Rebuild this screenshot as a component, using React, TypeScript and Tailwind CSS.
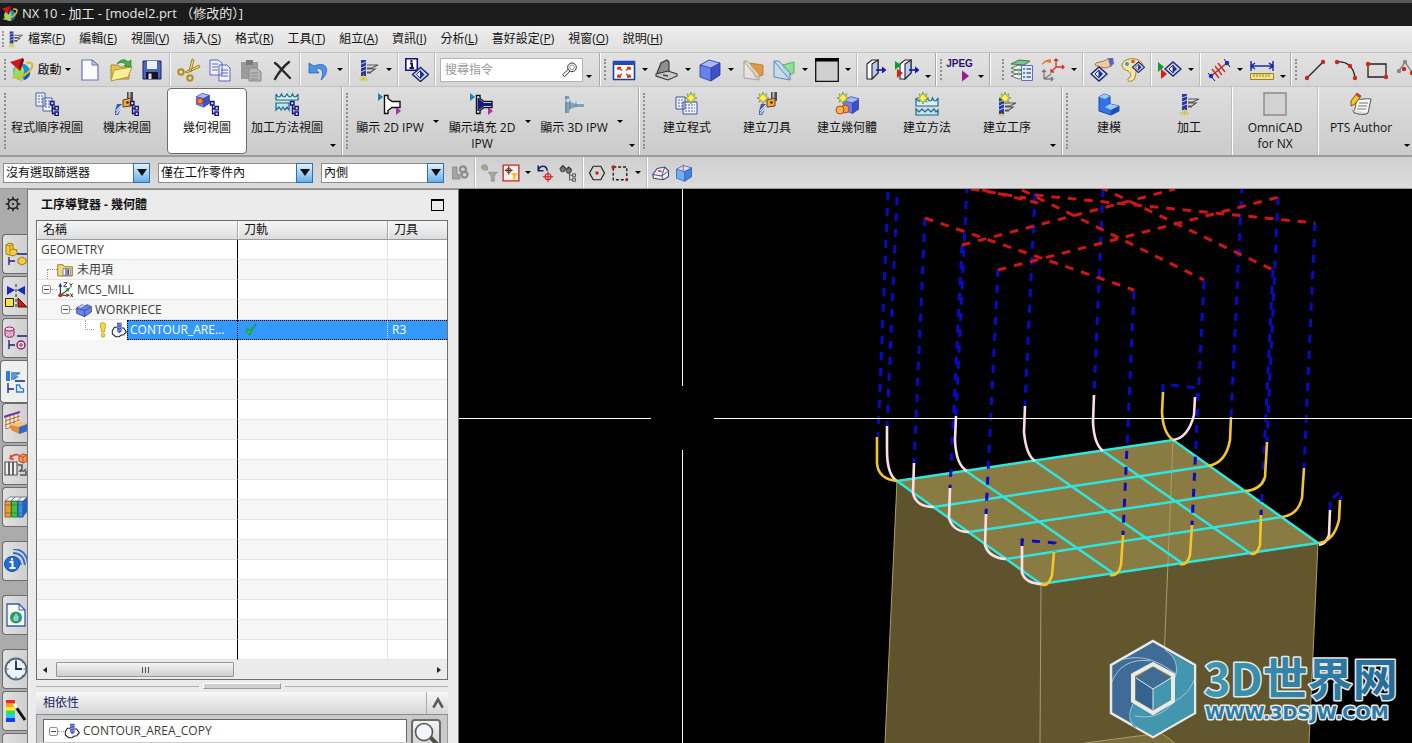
import React, { ReactNode } from "react";

type Kids = { children?: ReactNode };

/* ---------- icon helpers ---------- */

function Ico({ children, size = "size-6" }: Kids & { size?: string }) {
  return (
    <svg viewBox="0 0 24 24" className={`${size} shrink-0`} fill="none" aria-hidden="true">
      {children}
    </svg>
  );
}

const NxLogo = ({ size = "size-6" }: { size?: string }) => (
  <Ico size={size}>
    <circle cx="11.500" cy="14" r="8.500" fill="#1c8fd8" />
    <path d="M6 8c5-2 9 2 8 6s-2 5 0 8c-6 1-11-3-10.500-9z" fill="#8fe35c" />
    <path d="M14 22c4-1 7-5 6-9-2 1-6 5-6 9z" fill="#1b56b0" />
    <path d="M2 19c7 3 20-5 20.500-12 0-2-3-3-6-2" stroke="#e3b62c" strokeWidth="2.200" />
    <path d="M0 4l13-4 1 2-4 11z" fill="#d4161c" />
    <path d="M12 0l2 2-4 11-1-4z" fill="#7e0a10" />
  </Ico>
);

const Star = ({ x, y }: { x: number; y: number }) => (
  <g transform={`translate(${x} ${y})`}>
    <path d="M0-6l1.300 3.400L4.200-4.200 2.600-1.300 6 0 2.600 1.300 4.200 4.200 1.300 2.600 0 6-1.300 2.600-4.200 4.200-2.600 1.300-6 0-2.600-1.300-4.200-4.200-1.300-2.600z" fill="#fff34a" stroke="#6b7d4a" strokeWidth=".7" />
  </g>
);

const TreeMark = () => (
  <path d="M17.500 12.500v10M17.500 16.500h3M17.500 21.500h3M15.500 9.500h3.500v3.500h-3.500zM20 14.500h3.400v3.400H20zM20 20h3.400v3.400H20z" stroke="#14147a" strokeWidth="1.400" fill="#e4e4f4" />
);

const Tool = ({ color = "#2b3a9a" }: { color?: string }) => (
  <>
    <path d="M5 2h5v16H5z" fill={color} />
    <path d="M5 6l5-2M5 10l5-2M5 14l5-2" stroke="#b9c4f2" />
    <path d="M11 7h11l-6 3h-5M11 11h8l-4 3h-4M11 15h4" stroke="#555" strokeWidth="1.200" />
    <path d="M7.500 17v6M3 21h9M4 18l7 5M11 18l-7 5" stroke="#d6c436" />
  </>
);

const Sheets = () => (
  <>
    <path d="M1 1h9v13H1zM8 6h9v13H8z" fill="#f2f5ff" stroke="#4a5fa8" />
    <path d="M3 4h6M3 7h5M3 10h5M10 9h6M10 12h6M10 15h6" stroke="#4a5fa8" strokeDasharray="2 1" />
  </>
);

const SheetsWide = () => (
  <>
    <path d="M1 5h9v12H1zM8 10h14v12H8z" fill="#f2f5ff" stroke="#3a4fa0" />
    <path d="M3 8h6M3 11h5M3 14h5M10 13h10M10 16h10M10 19h10" stroke="#4a5fa8" strokeDasharray="2 1" />
  </>
);

const ToolPair = () => (
  <>
    <path d="M12 0h6v9h-6z" fill="#4c4c56" />
    <path d="M13.500 0h2v9h-2z" fill="#b8b8c0" />
    <path d="M8 8l8-2v8l-8 1z" fill="#f0ab3c" stroke="#6d3d10" />
    <circle cx="12.500" cy="10.500" r="1.300" fill="#402000" />
    <path d="M2 12h5v3l-4 8H0v-4z" fill="#3c5ca8" />
    <path d="M1 19l6-6M1 22l6-7" stroke="#dfe8ff" strokeWidth="1.200" />
  </>
);

const Box3d = ({ a = "#a9b8fb", b = "#6a80ec", c = "#3d52c4" }) => (
  <>
    <path d="M2 7l9-5 11 3v12l-9 6-11-4z" fill={b} />
    <path d="M2 7l9-5 11 3-9 5z" fill={a} />
    <path d="M13 10l9-5v12l-9 6z" fill={c} />
    <path d="M2 7l11 3 9-5M13 10v13M2 7l9-5 11 3v12l-9 6-11-4z" stroke="#2a3a9c" strokeWidth=".8" />
  </>
);

const Waves = () => (
  <>
    <path d="M1 8V2c2 4 4 4 5.500 0C8 6 10 6 12 2c2 4 4 4 5.500 0C19 6 21 6 23 2v6z" fill="#d8f0f4" stroke="#136a92" strokeWidth="1.200" />
    <path d="M1 11h13v7l-2-3-2 3-2-3-2 3-2-3-3 3z" fill="#c4e4ee" stroke="#136a92" strokeWidth="1.200" />
  </>
);

const WavesWide = () => (
  <>
    <path d="M1 14V6c2 4 4 4 5.500 0C8 10 10 10 12 6c2 4 4 4 5.500 0C19 10 21 10 23 6v8z" fill="#d8f0f4" stroke="#136a92" strokeWidth="1.200" />
    <path d="M1 23v-6l3 3 3-3 3 3 3-3 3 3 3-3 2 3 2-2v5z" fill="#c4e4ee" stroke="#136a92" strokeWidth="1.200" />
  </>
);

const Diamond = ({ x = 12, y = 12 }: { x?: number; y?: number }) => (
  <g transform={`translate(${x} ${y})`}>
    <path d="M-8 0L0-7 8 0 0 7z" fill="#cfd6ea" stroke="#1b2a66" strokeWidth="1.400" />
    <path d="M0-4v8l-4-4z" fill="#f4f7ff" stroke="#1b2a8c" />
    <path d="M0-4v8l4-4z" fill="#1a2ea0" />
  </g>
);

const Door = () => (
  <>
    <path d="M3 6l5-4h6v13l-6 6H3z" fill="#fff" stroke="#222" strokeWidth="1.100" />
    <path d="M8 6l6-4v13l-6 6z" fill="#b9cbf6" stroke="#222" strokeWidth="1.100" />
    <path d="M12 12h8" stroke="#1515c0" strokeWidth="1.600" />
    <path d="M18 8.500l4.500 3.500-4.500 3.500z" fill="#1515c0" />
  </>
);

function Nozzle({ kind }: { kind: "outline" | "filled" | "solid" }) {
  const bell = "M6.500 3.500h3.500v3l4 3h8v6h-8l-4 3v3H6.500z";
  if (kind === "solid") {
    return (
      <>
        <path d="M3 4h4l1 4 6 2h8v5h-8l-6 2-1 4H3z" fill="#7fa5b8" />
        <path d="M3 7h5l6 3h8v2h-8l-6-2H3z" fill="#cfe2ea" />
        <path d="M4 4v17M8 8v9M14 10v5" stroke="#55798c" strokeWidth=".8" />
      </>
    );
  }
  return (
    <>
      <path d="M0 1l5 4-5 4z" fill="#1f82ae" />
      <path d="M18 15l5 4-5 4z" fill="#b32ab0" />
      <path d={bell} fill="#fff" stroke="#111" strokeWidth="1.400" />
      {kind === "filled" && <path d="M8.500 6v13M10 9l4 3h7v1h-7l-4 3z" fill="#141a80" stroke="#141a80" strokeWidth="2" />}
    </>
  );
}

/* ---------- toolbar parts ---------- */

function IconButton({ label, children }: Kids & { label: string }) {
  return (
    <button type="button" aria-label={label} className="flex h-8 w-[31px] shrink-0 items-center justify-center">
      {children}
    </button>
  );
}

function Caret({ low = false }: { low?: boolean }) {
  return (
    <button
      type="button"
      aria-label="更多"
      className={`flex w-3 shrink-0 justify-center self-stretch ${low ? "items-end pb-2" : "items-center"}`}
    >
      <span className="border-x-[3px] border-t-[3px] border-x-transparent border-t-black" />
    </button>
  );
}

const Sep = () => (
  <span className="flex w-1.5 shrink-0 justify-center self-stretch">
    <span className="w-0.5 border-r border-white bg-[#bdbdbd]" />
  </span>
);

const Grip = () => <span className="my-1.5 ml-1 w-0 shrink-0 self-stretch border-l-2 border-dotted border-[#8f8f8f]" />;

function Group({ children, className = "" }: Kids & { className?: string }) {
  return (
    <div className={`flex shrink-0 items-center border-r border-[#a9a9a9] shadow-[1px_0_0_#fff] ${className}`}>
      <Grip />
      {children}
    </div>
  );
}

function BigButton({ icon, label, active = false }: { icon: ReactNode; label: string; active?: boolean }) {
  return (
    <button
      type="button"
      className={`flex h-[66px] w-20 shrink-0 flex-col items-center gap-1 rounded-sm border pt-[3px] leading-4 ${
        active ? "border-[#6d6d6d] bg-white" : "border-transparent"
      }`}
    >
      {icon}
      <span className="whitespace-pre">{label}</span>
    </button>
  );
}

/* ---------- title + menu ---------- */

const menus: [string, string][] = [
  ["檔案", "F"],
  ["編輯", "E"],
  ["視圖", "V"],
  ["插入", "S"],
  ["格式", "R"],
  ["工具", "T"],
  ["組立", "A"],
  ["資訊", "I"],
  ["分析", "L"],
  ["喜好設定", "P"],
  ["視窗", "O"],
  ["說明", "H"],
];

function TitleBar() {
  return (
    <header className="flex h-[26px] items-center gap-1 border-t-[3px] border-[#57585b] bg-[#1b1b1b] pb-0.5 pl-0.5 text-[13px] text-[#e6e6e6]">
      <NxLogo size="size-4" />
      <h1>NX 10 - 加工 - [model2.prt （修改的）]</h1>
    </header>
  );
}

function MenuBar() {
  return (
    <nav className="flex h-[27px] items-center border-b border-[#c2c2c2] bg-gradient-to-b from-[#ededed] to-[#e0e0e0]">
      <span className="ml-0.5 h-4 border-l-2 border-dotted border-[#999]" />
      <span className="mr-1 ml-0.5">
        <Ico size="size-[18px]">
          <Tool />
        </Ico>
      </span>
      <ul className="flex gap-3.5 whitespace-nowrap">
        {menus.map(([name, key]) => (
          <li key={key}>
            <button type="button">
              {name}(<u>{key}</u>)
            </button>
          </li>
        ))}
      </ul>
    </nav>
  );
}

/* ---------- standard toolbar ---------- */

function StandardBar() {
  return (
    <div className="flex h-[34px] overflow-hidden border-b border-[#c2c2c2] bg-gradient-to-b from-[#e2e2e2] to-[#d6d6d6]">
      <Group className="pr-1">
        <button type="button" className="flex h-8 shrink-0 items-center">
          <span className="flex w-[31px] justify-center">
            <NxLogo />
          </span>
          <span className="w-[25px] text-center whitespace-nowrap">啟動</span>
        </button>
        <Caret />
        <IconButton label="新建">
          <Ico>
            <path d="M4 2h10l6 5v15H4z" fill="#fbfbff" stroke="#6a72b8" strokeWidth="1.200" />
            <path d="M14 2v5h6z" fill="#c6ccf0" stroke="#6a72b8" />
          </Ico>
        </IconButton>
        <IconButton label="開啟">
          <Ico>
            <path d="M2 7h7l2 2h9v12H2z" fill="#e3c44e" stroke="#a8862a" />
            <path d="M5 12l18-3-4 10-17 4z" fill="#fbee9a" stroke="#b8962c" />
            <path d="M8 6c2-4 8-6 11-2l3-2v7l-7-1 2-2c-3-2-6-2-9 0z" fill="#3fb53a" stroke="#21802a" strokeWidth=".7" />
          </Ico>
        </IconButton>
        <IconButton label="儲存">
          <Ico>
            <path d="M3 3h18v18H3z" fill="#4a68b8" stroke="#1a2464" />
            <path d="M7 3h10v8H7z" fill="#e9f1fa" />
            <path d="M6 14h12v7H6z" fill="#101426" />
            <path d="M8.500 15.500h3V21h-3z" fill="#dcdcdc" />
          </Ico>
        </IconButton>
        <Sep />
        <IconButton label="剪下">
          <Ico>
            <path d="M12 13L15 1l2 1-3 12zM8 14L22 7l1 2-13 6z" fill="#f3dc58" stroke="#8c7414" strokeWidth=".8" />
            <circle cx="4" cy="14" r="2.700" stroke="#b08f18" strokeWidth="2" />
            <circle cx="13" cy="20" r="2.700" stroke="#b08f18" strokeWidth="2" />
          </Ico>
        </IconButton>
        <IconButton label="複製">
          <Ico>
            <path d="M2 2h8l4 3v12H2zM11 7h8l3 3v13H11z" fill="#eef0ff" stroke="#5a66b4" />
            <path d="M4 6h6M4 9h6M4 12h6M13 12h7M13 15h7M13 18h7" stroke="#5a66b4" />
          </Ico>
        </IconButton>
        <IconButton label="貼上">
          <Ico>
            <path d="M2 4h17v17H2z" fill="#9b9b9b" />
            <path d="M7 2h7v5H7z" fill="#7c7c7c" />
            <path d="M10 10h8l4 4v9H10z" fill="#b5b5b5" stroke="#8a8a8a" />
            <path d="M12 15h7M12 18h7M12 21h7" stroke="#8a8a8a" />
          </Ico>
        </IconButton>
        <IconButton label="刪除">
          <Ico>
            <path d="M5 5c4 3 9 9 15 15M19 4C14 8 9 14 5 21" stroke="#2a2a2a" strokeWidth="2.400" strokeLinecap="round" />
          </Ico>
        </IconButton>
        <Sep />
        <IconButton label="復原">
          <Ico>
            <path d="M2 5l0 10 10 0-3-4c5-2 9 2 5 11 8-6 9-20-7-14z" fill="#4f93e6" stroke="#1c58b0" strokeWidth=".7" />
          </Ico>
        </IconButton>
        <Caret />
        <Sep />
        <IconButton label="加工">
          <Ico>
            <Tool />
          </Ico>
        </IconButton>
        <Caret />
        <Sep />
        <IconButton label="命令資訊">
          <Ico>
            <path d="M.8.800h11.500v11.500H.8z" fill="#fff" stroke="#141478" strokeWidth="1.600" />
            <path d="M5 5.500h2V10M4.500 10H9M6.500 2v2" stroke="#141478" strokeWidth="2" />
            <Diamond x={15.5} y={16.5} />
          </Ico>
        </IconButton>
        <Sep />
        <label className="ml-0.5 flex h-6 w-[143px] shrink-0 items-center border border-[#b4b4b4] bg-white">
          <input
            type="search"
            aria-label="搜尋指令"
            placeholder="搜尋指令"
            className="min-w-0 flex-1 bg-transparent pl-1 outline-none placeholder:text-[#9a9a9a]"
          />
          <Ico size="mr-1 size-4">
            <circle cx="15" cy="8" r="6.500" stroke="#333" strokeWidth="1.500" />
            <circle cx="15" cy="8" r="3.500" stroke="#777" strokeWidth="1.200" />
            <path d="M9.500 11L1 19l3 3 8-8.500" stroke="#333" strokeWidth="1.500" />
          </Ico>
        </label>
        <Caret low />
      </Group>
      <Group>
        <span className="w-0.5" />
        <IconButton label="適合視窗">
          <Ico>
            <path d="M1.500 3.500h21v18h-21z" fill="#fff" stroke="#173f9c" strokeWidth="1.600" />
            <path d="M1 3h22v4H1z" fill="#1c4cb8" />
            <path d="M6 12V9.500h3M18 12V9.500h-3M6 16.500V19h3M18 16.500V19h-3M6 9.500l4 3M18 9.500l-4 3M6 19l4-3M18 19l-4-3" stroke="#d42a20" strokeWidth="1.500" />
          </Ico>
        </IconButton>
        <Caret />
        <IconButton label="視圖方向">
          <Ico>
            <path d="M2 15L6 5l6-3 2 2v9l-5 4z" fill="#8f8f8f" stroke="#333" strokeWidth="1.100" />
            <path d="M1 16l12-3 9 3v2l-9 4-12-4z" fill="#c9c9c9" stroke="#333" strokeWidth="1.100" />
            <path d="M8 17l5 1" stroke="#444" strokeWidth="1.500" />
          </Ico>
        </IconButton>
        <Caret />
        <IconButton label="著色">
          <Ico>
            <Box3d />
          </Ico>
        </IconButton>
        <Caret />
        <IconButton label="剖面">
          <Ico>
            <path d="M9 5l13 2v10l-8 3z" fill="#e09a45" stroke="#b9742a" strokeWidth=".8" />
            <path d="M3 3h3l12 13v6L3 20z" fill="#e8e6e0" fillOpacity=".7" stroke="#a9a193" />
            <path d="M3 3l15 19" stroke="#a9a193" />
          </Ico>
        </IconButton>
        <IconButton label="編輯剖面">
          <Ico>
            <path d="M11 7l11-3v11l-7 3z" fill="#8fe09a" stroke="#3fa654" strokeWidth=".8" />
            <path d="M2 3h5l11 12v7L2 19z" fill="#c4daf2" fillOpacity=".8" stroke="#5f86bd" />
            <path d="M2 3l16 19" stroke="#5f86bd" />
          </Ico>
        </IconButton>
        <Caret />
        <IconButton label="背景">
          <Ico>
            <path d="M.7.700h22.600v22.600H.7z" fill="#cfcfcf" stroke="#111" strokeWidth="1.300" />
            <path d="M0 0h24v3.500H0z" fill="#000" />
          </Ico>
        </IconButton>
        <Caret />
        <Sep />
        <IconButton label="匯出">
          <Ico>
            <Door />
          </Ico>
        </IconButton>
        <IconButton label="匯入">
          <Ico>
            <g transform="translate(2 0)">
              <Door />
            </g>
            <path d="M0 3l6 4-6 5z" fill="#149a2c" />
            <path d="M2 11l6 4-6 5z" fill="#d02018" />
          </Ico>
        </IconButton>
        <Caret low />
        <span className="w-px" />
      </Group>
      <Group className="pr-0.5">
        <span className="w-0.5" />
        <button type="button" className="flex h-8 w-[31px] shrink-0 flex-col items-center pt-1 font-['Liberation_Sans',sans-serif] text-[#2b1370]">
          <span className="text-[10px] leading-3 font-bold">JPEG</span>
          <Ico size="ml-3 size-3">
            <path d="M4 1l14 11L4 23z" fill="#9c1890" />
          </Ico>
        </button>
        <Caret low />
      </Group>
      <Group className="ml-2">
        <span className="w-0.5" />
        <IconButton label="圖層">
          <Ico>
            <path d="M1 18l8-3 8 3-8 3zM1 14l8-3 8 3-8 3zM1 10l8-3 8 3-8 3z" fill="#eef4ee" stroke="#5e7a6c" />
            <path d="M1 6l8-4 11 1-6 4z" fill="#7cc48c" stroke="#3d7c54" />
            <path d="M11.500 7.500h11v15h-11z" fill="#e4ebfb" stroke="#5a6eb0" />
            <path d="M13 11h2M13 15h2M13 19h2M16.500 11h4.500M16.500 15h4.500M16.500 19h4.500" stroke="#4a5ea8" strokeWidth="1.300" />
          </Ico>
        </IconButton>
        <IconButton label="座標系">
          <Ico>
            <path d="M15 9V1M15 9h8M15 9l-5 5M13 3l2-2 2 2M21 7l2 2-2 2M10 11v3h3" stroke="#d03428" strokeWidth="1.300" />
            <path d="M3 21v-9M3 21h9M3 21l7-5M1 14l2-2 2 2M10 19l2 2-2 2" stroke="#7a7a7a" strokeWidth="1.300" />
            <path d="M1 5l4-3 5-1 0 4-5-1-4 3z" fill="#ee7a2c" />
          </Ico>
        </IconButton>
        <Caret />
        <Sep />
        <IconButton label="編輯顯示">
          <Ico>
            <path d="M6 5l8-2 5-3 3 8-7 2-5-1-5-2z" fill="#f0c9a0" stroke="#8c6240" strokeWidth=".8" />
            <path d="M18 0l5-1 1 7-4 2z" fill="#5566c8" />
            <Diamond x={9} y={16} />
          </Ico>
        </IconButton>
        <IconButton label="調色盤">
          <Ico>
            <path d="M1 7c1-7 15-9 20-2 3 5-3 6-6 7 0 3 0 9-4 11-4 1-6-1-2-4 2-2 0-5-2-6-3-1-6-3-6-6z" fill="#f8e6a0" stroke="#a67c20" />
            <circle cx="6" cy="6" r="2" fill="#3b9be0" />
            <circle cx="12" cy="3.500" r="1.800" fill="#de4535" />
            <g transform="translate(7 1) scale(.75)">
              <Diamond x={14} y={11} />
            </g>
          </Ico>
        </IconButton>
        <Sep />
        <IconButton label="播放">
          <Ico>
            <path d="M0 4l6 5-6 5z" fill="#149a2c" />
            <path d="M3 11l6 5-6 5z" fill="#d02018" />
            <Diamond x={15} y={11} />
          </Ico>
        </IconButton>
        <Caret />
        <Sep />
        <IconButton label="量測">
          <Ico>
            <path d="M3 19L21 4M5 11l7 9M8 8l7 9M11 5l7 9" stroke="#c82c24" strokeWidth="1.400" />
            <path d="M1 15l7 8M17 1l6 8" stroke="#222" />
            <circle cx="4" cy="18" r="2.200" fill="#1b2cc0" />
            <circle cx="20" cy="5" r="2.200" fill="#1b2cc0" />
          </Ico>
        </IconButton>
        <Caret />
        <IconButton label="尺寸">
          <Ico>
            <path d="M1 3v10M23 3v10M1 8h22M5 5L1 8l4 3M19 5l4 3-4 3" stroke="#1c2ca8" strokeWidth="1.500" />
            <path d="M.5 15.500h23v6H.5z" fill="#f5e28c" stroke="#9a8424" />
            <path d="M4 16v3M7 16v3M10 16v3M13 16v3M16 16v3M19 16v3" stroke="#9a8424" />
          </Ico>
        </IconButton>
        <Caret low />
        <span className="w-px" />
      </Group>
      <Group>
        <span className="w-0.5" />
        <IconButton label="直線">
          <Ico>
            <path d="M4 20L20 4" stroke="#222" strokeWidth="1.300" />
            <circle cx="4" cy="20" r="2.200" fill="#c8281e" />
            <circle cx="20" cy="4" r="2.200" fill="#c8281e" />
          </Ico>
        </IconButton>
        <IconButton label="圓弧">
          <Ico>
            <path d="M3 4c10-1 17 5 18 16" stroke="#222" strokeWidth="1.300" />
            <circle cx="3" cy="4" r="2.200" fill="#c8281e" />
            <circle cx="16" cy="8" r="2.200" fill="#c8281e" />
            <circle cx="21" cy="20" r="2.200" fill="#c8281e" />
          </Ico>
        </IconButton>
        <IconButton label="矩形">
          <Ico>
            <path d="M3 6h18v13H3z" stroke="#222" strokeWidth="1.300" />
            <circle cx="3" cy="6" r="2.200" fill="#c8281e" />
            <circle cx="21" cy="19" r="2.200" fill="#c8281e" />
          </Ico>
        </IconButton>
        <IconButton label="曲線">
          <Ico>
            <path d="M3 13l6-9 6 9 8 3" stroke="#888" strokeWidth="1.500" />
            <circle cx="3" cy="13" r="2.200" fill="#888" />
            <circle cx="9" cy="4" r="2.200" fill="#888" />
            <circle cx="8" cy="11" r="2.200" fill="#c8281e" />
            <circle cx="16" cy="15" r="2.200" fill="#c8281e" />
          </Ico>
        </IconButton>
      </Group>
    </div>
  );
}

/* ---------- manufacturing toolbar ---------- */

function MachiningBar() {
  return (
    <div className="flex h-[70px] overflow-hidden border-b-2 border-[#9c9c9c] bg-gradient-to-b from-[#dedede] to-[#cbcbcb]">
      <Group>
        <span className="w-px" />
        <BigButton label="程式順序視圖" icon={<Ico><Sheets /><TreeMark /></Ico>} />
        <BigButton label="機床視圖" icon={<Ico><ToolPair /><TreeMark /></Ico>} />
        <BigButton
          active
          label="幾何視圖"
          icon={
            <Ico>
              <g transform="scale(.66)"><Box3d /></g>
              <circle cx="5" cy="9" r="3" fill="#f08a2c" stroke="#b8341c" />
              <TreeMark />
            </Ico>
          }
        />
        <BigButton label="加工方法視圖" icon={<Ico><Waves /><TreeMark /></Ico>} />
        <Caret low />
        <span className="w-0.5" />
      </Group>
      <Group>
        <span className="w-0.5" />
        <BigButton label="顯示 2D IPW" icon={<Ico><Nozzle kind="outline" /></Ico>} />
        <Caret />
        <BigButton label={"顯示填充 2D\nIPW"} icon={<Ico><Nozzle kind="filled" /></Ico>} />
        <Caret />
        <BigButton label="顯示 3D IPW" icon={<Ico><Nozzle kind="solid" /></Ico>} />
        <Caret />
        <Caret low />
      </Group>
      <Group>
        <span className="w-0.5" />
        <BigButton label="建立程式" icon={<Ico><SheetsWide /><Star x={16} y={6} /></Ico>} />
        <BigButton label="建立刀具" icon={<Ico><g transform="translate(4 0)"><ToolPair /></g><Star x={8} y={6} /></Ico>} />
        <BigButton
          label="建立幾何體"
          icon={
            <Ico>
              <g transform="translate(7 3) scale(.8)"><Box3d /></g>
              <circle cx="10" cy="17" r="4" fill="#f6a23c" stroke="#c0401c" />
              <circle cx="5" cy="18" r="4" fill="#fbb84c" stroke="#c0401c" />
              <Star x={8} y={6} />
            </Ico>
          }
        />
        <BigButton label="建立方法" icon={<Ico><WavesWide /><Star x={8} y={6} /></Ico>} />
        <BigButton label="建立工序" icon={<Ico><g transform="translate(-1 4)"><Tool /></g><Star x={10} y={6} /></Ico>} />
        <Caret low />
        <span className="w-0.5" />
      </Group>
      <Group>
        <span className="w-px" />
        <BigButton
          label="建模"
          icon={
            <Ico>
              <path d="M2 5l5-3 6 2v8l9 2v5l-8 4-12-4z" fill="#3273e6" stroke="#1b4cae" />
              <path d="M2 5l5-3 6 2-5 3zM8 15l5-3 9 2-8 4z" fill="#a3c8fb" />
              <path d="M14 18l8-4v5l-8 4z" fill="#1c50bc" />
            </Ico>
          }
        />
        <BigButton label="加工" icon={<Ico><Tool /></Ico>} />
        <Sep />
        <BigButton label={"OmniCAD\nfor NX"} icon={<Ico><path d="M1 1h22v22H1z" fill="#d2d2d2" stroke="#8a8a8a" strokeWidth="1.400" /></Ico>} />
        <Sep />
        <BigButton
          label="PTS Author"
          icon={
            <Ico>
              <path d="M8 7c5 1 9-1 14 0l-3 14c-4 2-9-1-14 0z" fill="#f6f6f6" stroke="#555" />
              <path d="M4 18c-1 4 12 6 15 3" fill="#ddd" stroke="#555" />
              <path d="M10 11h9M9 14h9M8 17h9" stroke="#777" />
              <path d="M8 1l4 3-6 8-4 2 0-5z" fill="#f5c832" stroke="#7b5a10" />
              <path d="M8 1l4 3-1.500 2-4-3z" fill="#d0402c" />
            </Ico>
          }
        />
        <Caret low />
      </Group>
    </div>
  );
}

/* ---------- selection toolbar ---------- */

function Picker({ label, value, className }: { label: string; value: string; className: string }) {
  return (
    <div className={`relative h-5 shrink-0 ${className}`}>
      <select
        aria-label={label}
        defaultValue={value}
        className="h-5 w-full appearance-none border border-[#8c8c8c] bg-white pl-0.5 leading-4 outline-none"
      >
        <option>{value}</option>
      </select>
      <span className="pointer-events-none absolute inset-y-0 right-0 flex w-[17px] items-center justify-center border border-[#2d6fb0] bg-gradient-to-b from-[#e4f2fd] to-[#64aeea]">
        <span className="border-x-5 border-t-7 border-x-transparent border-t-[#111]" />
      </span>
    </div>
  );
}

function SmallButton({ label, children, wide = false }: Kids & { label: string; wide?: boolean }) {
  return (
    <button type="button" aria-label={label} className={`flex h-6 shrink-0 items-center justify-center ${wide ? "w-6" : "w-[22px]"}`}>
      {children}
    </button>
  );
}

function SelectionBar() {
  const s = "size-[18px]";
  return (
    <div className="flex h-8 items-center border-b border-[#9a9a9a] bg-gradient-to-b from-[#cfcfcf] to-[#dcdcdc] pl-[3px]">
      <Picker label="選取篩選器" value="沒有選取篩選器" className="mr-2 w-[147px]" />
      <Picker label="選取範圍" value="僅在工作零件內" className="mr-2 w-[155px]" />
      <Picker label="規則" value="內側" className="mr-1 w-[123px]" />
      <SmallButton label="連結" wide>
        <Ico size={s}>
          <path d="M2 4v16h10v-6H8V4z" fill="#a4a4a4" stroke="#808080" />
          <circle cx="16" cy="7" r="4" stroke="#8d8d8d" strokeWidth="3" />
          <circle cx="18" cy="14" r="4" stroke="#8d8d8d" strokeWidth="3" />
        </Ico>
      </SmallButton>
      <Sep />
      <SmallButton label="清除篩選">
        <Ico size={s}>
          <path d="M2 6a4 4 0 018-2v4H4M11 11h12l-4 5v7h-4v-7z" fill="#a9a594" stroke="#87958f" />
        </Ico>
      </SmallButton>
      <SmallButton label="篩選選取">
        <Ico size={s}>
          <path d="M1.500 1.500h21v21h-21z" fill="#fdf0ec" stroke="#c22a22" strokeWidth="1.800" />
          <path d="M9 3v11M4 8.500h10" stroke="#333" strokeWidth="1.500" />
          <circle cx="9" cy="8.500" r="3" stroke="#9a2a20" strokeWidth="1.300" />
          <path d="M12 12h9l-3 4v5h-3v-5z" fill="#f2c12c" />
        </Ico>
      </SmallButton>
      <Caret />
      <SmallButton label="重設">
        <Ico size={s}>
          <path d="M3 9c2-8 11-8 12 0M3 2v7h7" stroke="#1c2470" strokeWidth="2.200" />
          <circle cx="16" cy="17" r="4" stroke="#d02020" strokeWidth="1.500" />
          <path d="M16 10v14M9 17h14" stroke="#d02020" strokeWidth="1.500" />
        </Ico>
      </SmallButton>
      <SmallButton label="尋找" wide>
        <Ico size={s}>
          <path d="M1 7l4-5 4 4M9 8l4-4 4 4" stroke="#333" strokeWidth="1.500" />
          <circle cx="5" cy="7" r="3.500" fill="#777" stroke="#333" />
          <circle cx="13" cy="9" r="3.500" fill="#777" stroke="#333" />
          <path d="M14 10v12M14 15h4M14 21h4M18 13h4v4h-4zM18 19h4v4h-4z" fill="#d9cf7c" stroke="#4c5c6c" strokeWidth="1.300" />
        </Ico>
      </SmallButton>
      <Sep />
      <SmallButton label="點">
        <Ico size={s}>
          <path d="M7 3h10l5 9-5 9H7l-5-9z" stroke="#222" strokeWidth="1.600" />
          <circle cx="12" cy="12" r="2.300" fill="#c81e1e" />
        </Ico>
      </SmallButton>
      <SmallButton label="矩形選取" wide>
        <Ico size={s}>
          <path d="M3 4h18v17H3z" stroke="#222" strokeWidth="1.800" strokeDasharray="4 2.500" />
          <circle cx="3" cy="4" r="2.500" fill="#c81e1e" />
          <circle cx="21" cy="21" r="2" fill="#c81e1e" />
        </Ico>
      </SmallButton>
      <Caret />
      <Sep />
      <SmallButton label="隱藏邊">
        <Ico size={s}>
          <path d="M1 14l6-8 10-2 5 5v8l-7 4-13-2z" fill="#f0f0f8" stroke="#444c74" strokeWidth="1.500" />
          <path d="M1 14l12 2 4-12M13 16l2 5M13 16l8-6" stroke="#444c74" strokeWidth="1.300" />
          <path d="M8 9l5 1" stroke="#d02a2a" strokeWidth="2" />
        </Ico>
      </SmallButton>
      <SmallButton label="實體" wide>
        <Ico size={s}>
          <Box3d a="#cfe4fc" b="#6db0f4" c="#3c86e0" />
          <path d="M11 1v9" stroke="#d02a2a" />
        </Ico>
      </SmallButton>
    </div>
  );
}

/* ---------- resource tabs ---------- */

function ResourceTab({ label, active = false, className = "", children }: Kids & { label: string; active?: boolean; className?: string }) {
  return (
    <button
      type="button"
      aria-label={label}
      className={`flex shrink-0 items-center justify-center rounded-l border border-r-0 border-[#6c6c6c] ${
        active ? "h-[43px] w-7 bg-[#efefef]" : "ml-0.5 h-10 w-[26px] bg-gradient-to-r from-[#e0e0e0] to-[#cfcfcf]"
      } ${className}`}
    >
      {children}
    </button>
  );
}

function ResourceBar() {
  return (
    <aside className="flex w-7 shrink-0 flex-col gap-0.5 overflow-hidden border-r border-[#7a7a7a] bg-[#ababab]">
      <button type="button" aria-label="設定" className="mb-[15px] flex h-7 w-[26px] shrink-0 items-center justify-center pt-0.5">
        <Ico size="size-4">
          <circle cx="12" cy="12" r="7" stroke="#222" strokeWidth="2.400" />
          <circle cx="12" cy="12" r="1.600" fill="#222" />
          <path d="M12 1v4M12 19v4M1 12h4M19 12h4M4 4l3 3M17 17l3 3M20 4l-3 3M7 17l-3 3" stroke="#222" strokeWidth="2.400" />
        </Ico>
      </button>
      <ResourceTab label="裝配導覽器">
        <Ico>
          <path d="M2 3l3-2 4 1v5l4 1v4l-4 2-7-2z" fill="#f6cd3c" stroke="#a17a10" />
          <path d="M2 3l4 1 3-2M6 4v8M6 8l3-1 4 1" stroke="#a17a10" strokeWidth=".8" />
          <path d="M14 17l4-2 4 2v4l-4 2-4-2z" fill="#f6cd3c" stroke="#a17a10" />
          <path d="M5 15v8M5 19h6M13 12h10" stroke="#1b1b80" strokeWidth="1.300" />
        </Ico>
      </ResourceTab>
      <ResourceTab label="約束導覽器">
        <Ico>
          <path d="M3 2l8 4-8 5zM21 2l-8 4 8 5z" fill="#1c2ab4" />
          <path d="M12 0v24" stroke="#222" strokeDasharray="3 2" />
          <path d="M1.500 14.500h8v8h-8z" fill="#ffe23c" stroke="#222" />
          <path d="M14 14l9 9h-9z" fill="#c81e18" stroke="#501010" />
        </Ico>
      </ResourceTab>
      <ResourceTab label="零件導覽器">
        <Ico>
          <path d="M1 3v6c0 3 9 3 9 0V3" fill="#e2a8c8" stroke="#8c2460" />
          <ellipse cx="5.500" cy="3" rx="4.500" ry="2" fill="#f5d3e4" stroke="#8c2460" />
          <path d="M5 14v9M5 19h6M13 10h10" stroke="#1b1b80" strokeWidth="1.300" />
          <circle cx="17" cy="19" r="4" fill="#f3dbe8" stroke="#8c2460" strokeWidth="1.500" />
          <circle cx="17" cy="19" r="1.300" stroke="#8c2460" />
        </Ico>
      </ResourceTab>
      <ResourceTab active label="工序導覽器">
        <Ico>
          <path d="M3 1h4v10H3z" fill="#2f7dd0" />
          <path d="M8 3h9l-4 2H8M8 7h6l-3 2H8" stroke="#2f7dd0" strokeWidth="1.300" />
          <path d="M5 13v10M5 19h6M12 11h10" stroke="#1b1b80" strokeWidth="1.300" />
          <path d="M13.500 15v7h7v-3l-3-1-1-3z" fill="#e2eefb" stroke="#2f7dd0" strokeWidth="1.300" />
        </Ico>
      </ResourceTab>
      <ResourceTab label="機床導覽器" className="-mt-0.5">
        <Ico>
          <path d="M0 6l16-5v11L2 19z" fill="#fbf3e4" />
          <path d="M1 10l15-5M1 14l15-5M2 18l8-3M2 6v12M6 5v12M10 3v12M14 2v8" stroke="#b86a30" />
          <path d="M0 6l16-5" stroke="#6a3cb4" strokeWidth="2.200" />
          <path d="M7 14l8-3 8 2v7l-8 3-8-4z" fill="#e88c34" />
          <path d="M7 14l8 2 8-3-8-2z" fill="#f7c47c" />
          <path d="M15 16l9-3v7l-9 3z" fill="#2c6cd0" />
        </Ico>
      </ResourceTab>
      <ResourceTab label="加工特徵">
        <Ico>
          <path d="M1 9h12v13H1z" fill="#f0f0f0" stroke="#555" strokeWidth="1.200" />
          <path d="M5 9v13M9 9v13" stroke="#444" strokeWidth="1.600" />
          <path d="M6 6c2-4 5-5 9-4M6 6l1-4M6 6l4 0" stroke="#e0462c" strokeWidth="1.600" />
          <path d="M15 3l4-2 4 1v6l-4 2-4-2z" fill="#f29a52" stroke="#c8401c" />
          <path d="M15 3l4 1v6M19 4l4-2" stroke="#c8401c" strokeWidth=".8" />
          <path d="M14 12h4v4l-2 2h4l2-2M16 22h6v-4" stroke="#555" strokeWidth="1.600" />
        </Ico>
      </ResourceTab>
      <ResourceTab label="重用程式庫">
        <Ico>
          <path d="M1 6h6v16H1z" fill="#f19a30" stroke="#b4581a" />
          <path d="M7.500 6h6v16h-6z" fill="#42c442" stroke="#1c7c24" />
          <path d="M14 6h5v16h-5z" fill="#3c8ee8" stroke="#1c54a8" />
          <path d="M19 6l4-4v15l-4 5z" fill="#1f63c4" />
          <path d="M1 6l5-4h17l-4 4z" fill="#f4f8f4" stroke="#557" strokeWidth=".7" />
          <path d="M7 6l4-4M13.500 6l4-4M1 10h18M1 18h18" stroke="#2c7a46" strokeWidth=".8" />
        </Ico>
      </ResourceTab>
      <ResourceTab label="HD3D 工具" className="mt-3">
        <Ico>
          <path d="M9 8c4 0 7 3 8 8M9 4c7 0 11 5 12 12M9 0c9 0 14 6 15 15" stroke="#3a6fc8" strokeWidth="1.800" />
          <circle cx="8" cy="15" r="7.500" fill="#1f6fd0" stroke="#164f9e" />
          <path d="M5.500 13h3v6M5.500 19h6M8 9v2.500" stroke="#fff" strokeWidth="2" />
        </Ico>
      </ResourceTab>
      <ResourceTab label="網頁瀏覽器" className="mt-3">
        <Ico>
          <path d="M3 1h12l6 6v16H3z" fill="#f8fbff" stroke="#2d5fae" strokeWidth="1.300" />
          <path d="M15 1v6h6" stroke="#2d5fae" />
          <circle cx="12" cy="14.500" r="6" fill="#2f9a52" />
          <path d="M12 10l3 4-1 4h-4l-1-3z" fill="#86cdf2" />
        </Ico>
      </ResourceTab>
      <ResourceTab label="歷史記錄" className="mt-3">
        <Ico>
          <circle cx="12" cy="12" r="10.500" fill="#eef3fa" stroke="#5c6878" strokeWidth="1.800" />
          <path d="M12 4v8h6" stroke="#1c2c50" strokeWidth="1.800" />
          <path d="M12 2.500v2M12 19.500v2M2.500 12h2M19.500 12h2M5 5l1 1M18 18l1 1M19 5l-1 1M5 19l1-1" stroke="#44546c" />
        </Ico>
      </ResourceTab>
      <ResourceTab label="系統材料">
        <Ico>
          <path d="M2 1h9v3.500H2z" fill="#f02820" />
          <path d="M2 4.500h9V8H2z" fill="#f8a01c" />
          <path d="M2 8h9v3.500H2z" fill="#f4f02c" />
          <path d="M2 11.500h9V15H2z" fill="#3cdc3c" />
          <path d="M2 15h9v4H2z" fill="#2cc8f0" />
          <path d="M2 19h9v4H2z" fill="#1c3ce8" />
          <path d="M12 8l9 13" stroke="#111" strokeWidth="3" />
          <path d="M10 5l3 4" stroke="#fff" strokeWidth="3" />
        </Ico>
      </ResourceTab>
      <ResourceTab label="角色" />
    </aside>
  );
}

/* ---------- operation navigator ---------- */

const Expander = () => (
  <button type="button" aria-label="收合" className="flex size-[9px] shrink-0 items-center justify-center rounded-[2px] border border-[#8f8f8f] bg-white">
    <span className="h-px w-[5px] bg-[#444]" />
  </button>
);

const Dots = ({ className }: { className: string }) => <span className={`h-0 shrink-0 border-t border-dotted border-[#999] ${className}`} />;

const Elbow = ({ className }: { className: string }) => (
  <span className={`h-2.5 w-[9px] shrink-0 self-start border-b border-l border-dotted border-[#999] ${className}`} />
);

const OperationIcon = () => (
  <Ico size="size-4">
    <path d="M9 8H5l-3 5v5l5 4h5l3-2 4-1 4-4-4-6h-3" fill="#f6f6fa" stroke="#222" strokeWidth="1.600" />
    <path d="M9 1h7v13l-3.500 3L9 14z" fill="#4a5cc0" />
    <path d="M9 5l7-2M9 9l7-2M9 13l7-2" stroke="#b4c0f4" />
  </Ico>
);

type Row = { name?: ReactNode; path?: ReactNode; tool?: string; selected?: boolean };

const rows: Row[] = [
  { name: <span className="pl-1">GEOMETRY</span> },
  {
    name: (
      <>
        <span className="ml-2.5 h-2.5 w-2.5 shrink-0 self-end border-t border-l border-dotted border-[#999]" />
        <span className="mr-1">
          <Ico size="size-4">
            <path d="M1 4h8l2 3h12v14H1z" fill="#f0d878" stroke="#8c7424" strokeWidth="1.300" />
            <path d="M9 10h11v10H9z" fill="#fdfdf0" stroke="#4c4c8c" />
            <path d="M12 12h5v6h-5M12 15h4" stroke="#28288c" strokeWidth="1.800" />
          </Ico>
        </span>
        未用項
      </>
    ),
  },
  {
    name: (
      <>
        <span className="ml-[5px]">
          <Expander />
        </span>
        <Dots className="w-1.5" />
        <span className="mr-0.5">
          <Ico size="size-4">
            <path d="M5 20V3M5 20h13M5 20l12-9" stroke="#222" strokeWidth="1.600" />
            <path d="M2 7l3-6 3 6z" fill="#1c3cc8" />
            <path d="M13 10l7-2-3 7z" fill="#1d9a38" />
            <path d="M14 17l6 3-6 3z" fill="#c82020" />
            <circle cx="5" cy="20" r="3" fill="#d02020" />
            <path d="M10 1h5l-5 6h5M19 2l2 3 2-3M21 5v3M20 17l4 6M24 17l-4 6" stroke="#222" strokeWidth="1.300" />
          </Ico>
        </span>
        <span className="pl-0.5">MCS_MILL</span>
      </>
    ),
  },
  {
    name: (
      <>
        <span className="ml-6">
          <Expander />
        </span>
        <Dots className="w-1.5" />
        <span className="mr-[3px]">
          <Ico size="size-4">
            <path d="M1 9l8-5 4 2 4-2 6 3v8l-10 7-12-5z" fill="#6c82e8" stroke="#34449c" strokeWidth="1.300" />
            <path d="M1 9l12 4 10-6M13 13v9M6 6l5 3" stroke="#34449c" strokeWidth="1.300" />
            <path d="M9 4l4 2-6 3-4-1z" fill="#c2cdfb" />
          </Ico>
        </span>
        WORKPIECE
      </>
    ),
  },
  {
    selected: true,
    name: (
      <>
        <Elbow className="ml-12" />
        <span className="ml-px flex shrink-0 items-center">
          <Ico size="size-4">
            <path d="M8 2c5-2 9 0 8 4l-2 9h-4L8 6z" fill="#f7d83c" stroke="#a88a14" />
            <circle cx="12" cy="20" r="2.800" fill="#f7d83c" stroke="#a88a14" />
          </Ico>
          <OperationIcon />
        </span>
        <span className="flex h-full flex-1 items-center border-y border-l border-dotted border-black bg-[#3399ff] pl-0.5 text-white">CONTOUR_ARE...</span>
      </>
    ),
    path: (
      <Ico size="size-3.5">
        <path d="M3 12l4-2 3 4c3-6 6-9 11-12-4 5-8 11-11 19z" fill="#2ed02e" stroke="#128a1c" strokeWidth="1.300" />
      </Ico>
    ),
    tool: "R3",
  },
  ...Array.from({ length: 16 }, () => ({})),
];

function OperationTable() {
  const head = "h-[19px] border-b border-[#9a9a9a] bg-gradient-to-b from-[#f4f4f4] via-[#ebebeb] to-[#d9dbdd] py-0 pl-1.5 text-left font-normal shadow-[inset_1px_0_0_#fff]";
  return (
    <div className="border border-[#6e6e6e] bg-white">
      <table className="w-full table-fixed border-separate border-spacing-0">
        <thead>
          <tr className="leading-[18px]">
            <th className={`w-[200px] ${head}`}>名稱</th>
            <th className={`w-[150px] border-l border-l-[#a6a6a6] ${head}`}>刀軌</th>
            <th className={`border-l border-l-[#a6a6a6] ${head}`}>刀具</th>
          </tr>
        </thead>
        <tbody className="text-[#3c3c3c]">
          {rows.map((r, i) => {
            const sel = r.selected ? "border-y border-dotted border-y-black bg-[#3399ff] text-white" : "border-b border-b-[#e4e4e4]";
            return (
              <tr key={i} className={i % 2 ? "bg-[#f6f6f6]" : "bg-white"}>
                <td className={`h-5 p-0 ${r.selected ? "" : "border-b border-b-[#e4e4e4]"}`}>
                  <div className={`flex items-center overflow-hidden whitespace-nowrap ${r.selected ? "h-5" : "h-[19px]"}`}>{r.name}</div>
                </td>
                <td className={`h-5 border-l border-l-black p-0 pl-1.5 ${sel}`}>{r.path}</td>
                <td className={`h-5 border-l border-l-[#e4e4e4] p-0 pl-1 ${sel}`}>{r.tool}</td>
              </tr>
            );
          })}
        </tbody>
      </table>
      <div className="flex h-[19px] items-center justify-between bg-[#ebebeb] px-1.5">
        <button type="button" aria-label="向左" className="border-y-[3px] border-r-4 border-y-transparent border-r-[#222]" />
        <div className="mr-auto ml-[9px] flex h-[15px] w-[178px] items-center justify-center gap-0.5 rounded-[1px] border border-[#979797] bg-gradient-to-b from-[#f5f5f5] to-[#cfcfcf]">
          <span className="h-1.5 w-px bg-[#555]" />
          <span className="h-1.5 w-px bg-[#555]" />
          <span className="h-1.5 w-px bg-[#555]" />
        </div>
        <button type="button" aria-label="向右" className="border-y-[3px] border-l-4 border-y-transparent border-l-[#222]" />
      </div>
    </div>
  );
}

function Navigator() {
  return (
    <section className="flex w-[431px] shrink-0 flex-col border-t border-r border-t-[#8a8a8a] border-r-[#777] bg-[#ebebeb] pr-2.5 pl-2">
      <div className="flex h-[30px] items-center justify-between pr-1 pl-[5px]">
        <h2 className="font-bold">工序導覽器 - 幾何體</h2>
        <button type="button" aria-label="最大化" className="h-3 w-[13px] border border-t-2 border-black" />
      </div>
      <OperationTable />
      <div className="flex h-3 shrink-0 items-center gap-1">
        <span className="h-px flex-1 bg-[#b0b0b0]" />
        <span className="h-1.5 w-[78px] border border-t-white border-r-[#999] border-b-[#999] border-l-white bg-[#d0d0d0]" />
        <span className="h-px flex-1 bg-[#b0b0b0]" />
      </div>
      <div className="flex h-[23px] shrink-0 items-center border-b border-[#8c8c8c] bg-gradient-to-b from-[#f8f8f8] to-[#d4d6d8] pl-[7px]">
        <h3 className="flex-1 text-[#1c1c5c]">相依性</h3>
        <button type="button" aria-label="收合相依性" className="flex h-full w-[22px] items-center justify-center border-l border-[#aaa]">
          <Ico size="size-3.5">
            <path d="M4 20l8-14 8 14" stroke="#5a5a5a" strokeWidth="4.500" />
          </Ico>
        </button>
      </div>
      <div className="flex min-h-0 flex-1 gap-1 border-x border-[#9a9a9a] bg-[#c9c9c9] pt-1 pr-1.5 pl-1.5">
        <div className="flex h-[23px] flex-1 items-center border border-b-0 border-[#666] bg-white pl-[5px] text-[#3c3c3c]">
          <Expander />
          <Dots className="w-1.5" />
          <OperationIcon />
          <span className="ml-[3px]">CONTOUR_AREA_COPY</span>
        </div>
        <button type="button" aria-label="尋找" className="flex h-8 w-[30px] shrink-0 items-start justify-center rounded border-2 border-[#6c6c6c] bg-gradient-to-b from-[#f4f4f4] to-[#cdcdcd]">
          <Ico>
            <path d="M16 16l7 7" stroke="#4e4e3c" strokeWidth="4" />
            <circle cx="10" cy="11" r="8.500" fill="#f2f6fa" stroke="#565656" strokeWidth="1.600" />
          </Ico>
        </button>
      </div>
    </section>
  );
}

/* ---------- graphics window ---------- */

const rapid = [
  "M888 192L878 437",
  "M897 197L887 426",
  "M925 218L914 463",
  "M967 185L956 416",
  "M962 245L950 488",
  "M998 269L986 514",
  "M1035 193L1025 406",
  "M1103 189L1094 395",
  "M1134 291L1123 535",
  "M1204 281L1192 525",
  "M1242 185L1231 417",
  "M1278 197L1267 442",
  "M1273 270L1261 515",
  "M1315 223L1304 468",
  "M1163 392V384L1197 388V397",
  "M1022 546V540L1055 543V552",
  "M1330 510V501M1333 498L1341 491V500",
];

const traverse = [
  "M925 218L1134 290",
  "M1022 190L1204 280",
  "M1100 187L1273 270",
  "M1035 195L1315 223",
  "M962 245L1175 189",
  "M998 270L1279 197",
  "M971 189L1026 198",
  "M966 186L1038 203",
];

const engage = [
  "M887 426V450Q887 475 897 481",
  "M914 463L913 493Q916 507 934 507",
  "M956 416L955 440Q956 465 967 471",
  "M950 488L949 518Q953 532 969 532",
  "M986 514L985 545Q989 558 1006 559",
  "M1025 406L1024 432Q1026 455 1035 461",
  "M1094 395L1093 422Q1094 444 1103 451",
  "M1195 397L1194 415Q1188 438 1173 440",
  "M1022 546V573Q1026 584 1043 584",
  "M1330 510L1329 535Q1326 544 1319 545",
];

const retract = [
  "M877 437V463Q878 479 897 481",
  "M1163 392L1162 412Q1163 433 1173 440",
  "M1231 417L1230 440Q1226 463 1208 466",
  "M1267 442L1265 477Q1261 490 1245 491",
  "M1304 468L1302 498Q1298 515 1282 517",
  "M1340 500L1339 520Q1334 541 1319 543",
  "M1123 535L1121 565Q1118 577 1110 575",
  "M1192 525L1190 555Q1187 566 1180 564",
  "M1261 515L1260 545Q1256 557 1250 553",
  "M1054 552L1052 575Q1048 588 1041 584",
];

function Watermark() {
  const text = { stroke: "#e6ebe8", strokeWidth: 3, strokeLinejoin: "round" as const, paintOrder: "stroke" };
  return (
    <g>
      <path d="M1153 641l42 24v48l-42 24-42-24v-48z" fill="#3e6c96" stroke="#e9ebe6" strokeWidth="2.500" />
      <path d="M1165 650c12 8 13 17 10 28l-1 24-21 12-20-10c-6 15 0 26 4 23l16 9 41-23.500v-46z" fill="#4296ae" />
      <path d="M1112 682c5-14 18-24 38-21M1121 660c20-6 36 0 55 14M1165 650c12 8 13 17 10 28M1194 680c-6 16-20 25-40 24M1175 701c-12 14-25 18-40 15M1133 704c-6 12-3 20 4 23" stroke="#a9c6d4" strokeWidth="1" fill="none" />
      <path d="M1153 664l20 11v26l-20 12-20-12v-26z" fill="#8a7c50" stroke="#e9ebe6" strokeWidth="4" />
      <path d="M1153 667l18 11-18 11-17-11z" fill="#3e6c96" />
      <path d="M1136 678l17 11v21l-17-10z" fill="#356290" />
      <path d="M1171 678l-18 11v21l18-10z" fill="#4296ae" />
      <path d="M1136 678l17 11 18-11M1153 689v21" stroke="#dfe8ea" fill="none" />
      <text x="1204" y="696" fontSize="45" fontWeight="700" fill="url(#brand)" fontFamily="'Noto Sans CJK SC', sans-serif" {...text}>
        3D世界网
      </text>
      <text x="1205" y="719" fontSize="18" fontWeight="700" fill="#2c7aa8" fontFamily="'DejaVu Sans', sans-serif" {...text}>
        WWW.3DSJW.COM
      </text>
    </g>
  );
}

function Viewport() {
  return (
    <main className="min-w-0 flex-1 overflow-hidden bg-black">
      <svg viewBox="459 189 953 554" preserveAspectRatio="xMinYMin slice" className="size-full" fill="none" role="img" aria-label="刀軌">
        <defs>
          <linearGradient id="brand" x1="0" x2="1" y1="0" y2="0">
            <stop offset="0" stopColor="#3f9ab0" />
            <stop offset="1" stopColor="#23699c" />
          </linearGradient>
        </defs>
        <path d="M897 481L885 743H1309L1318 543L1041 584z" fill="#62562f" />
        <path d="M897 481L885 743H1040L1041 584z" fill="#5f532d" />
        <path d="M1085 743L1161 733L1175 743z" fill="#7a6c3a" />
        <path d="M897 481L1173 440L1318 543L1041 584z" fill="#8a7b42" />
        <path d="M897 481L885 743M1041 584L1040 743M1318 543L1309 743M1173 440L1161 733M1085 743L1161 733L1175 743" stroke="#ab9d62" />
        <path
          d="M897 481L1173 440L1318 543L1041 584zM966 471L1113 573M1035 461L1182 563M1103 451L1250 553M934 507L1208 466M969 532L1245 491M1006 559L1282 517"
          stroke="#2de6df"
          strokeWidth="2.500"
        />
        <g stroke="#0a0ac4" strokeWidth="3" strokeDasharray="8 8">
          {rapid.map((d) => (
            <path key={d} d={d} />
          ))}
        </g>
        <g stroke="#cf1616" strokeWidth="3" strokeDasharray="8.500 8">
          {traverse.map((d) => (
            <path key={d} d={d} />
          ))}
        </g>
        <g stroke="#fbdfe4" strokeWidth="2.600">
          {engage.map((d) => (
            <path key={d} d={d} />
          ))}
        </g>
        <g stroke="#f4c62a" strokeWidth="2.600">
          {retract.map((d) => (
            <path key={d} d={d} />
          ))}
        </g>
        <path d="M459 418.500H651M714 418.500H1412M682.500 189V386M682.500 450V743" stroke="#fff" />
        <Watermark />
      </svg>
    </main>
  );
}

export default function App() {
  return (
    <div lang="zh-Hant" className="flex h-screen flex-col overflow-hidden bg-[#d4d4d4] font-['Open_Sans','Noto_Sans_CJK_TC',sans-serif] text-xs text-[#111]">
      <TitleBar />
      <MenuBar />
      <StandardBar />
      <MachiningBar />
      <SelectionBar />
      <div className="flex min-h-0 flex-1">
        <ResourceBar />
        <Navigator />
        <Viewport />
      </div>
    </div>
  );
}
